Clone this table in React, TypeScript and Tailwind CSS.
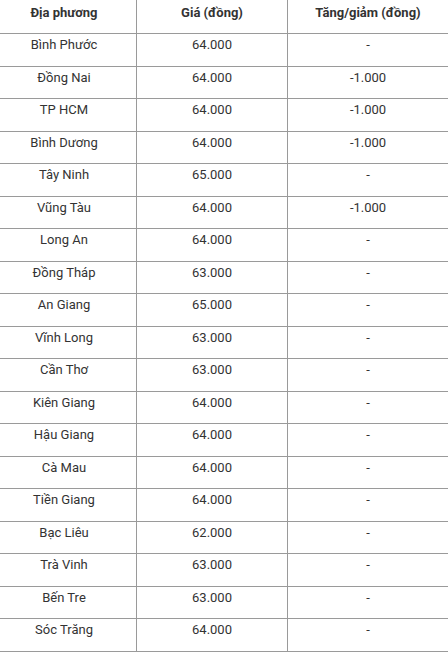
const rows: [string, string, string][] = [
  ["Bình Phước", "64.000", "-"],
  ["Đồng Nai", "64.000", "-1.000"],
  ["TP HCM", "64.000", "-1.000"],
  ["Bình Dương", "64.000", "-1.000"],
  ["Tây Ninh", "65.000", "-"],
  ["Vũng Tàu", "64.000", "-1.000"],
  ["Long An", "64.000", "-"],
  ["Đồng Tháp", "63.000", "-"],
  ["An Giang", "65.000", "-"],
  ["Vĩnh Long", "63.000", "-"],
  ["Cần Thơ", "63.000", "-"],
  ["Kiên Giang", "64.000", "-"],
  ["Hậu Giang", "64.000", "-"],
  ["Cà Mau", "64.000", "-"],
  ["Tiền Giang", "64.000", "-"],
  ["Bạc Liêu", "62.000", "-"],
  ["Trà Vinh", "63.000", "-"],
  ["Bến Tre", "63.000", "-"],
  ["Sóc Trăng", "64.000", "-"],
];

function Row({ cells, head }: { cells: [string, string, string]; head?: boolean }) {
  return (
    <div
      className={`grid grid-cols-[137px_151px_160px] border-b border-[#9a9a9a] ${
        head ? "h-[34px] font-bold" : "h-[32.5px]"
      }`}
    >
      <div className={`border-r border-[#9a9a9a] pr-[8px] text-center ${head ? "pt-[3px]" : "pt-[1px]"}`}>
        {cells[0]}
      </div>
      <div className={`border-r border-[#9a9a9a] text-center ${head ? "pt-[3px]" : "pt-[1px]"}`}>{cells[1]}</div>
      <div className={`text-center ${head ? "pt-[3px]" : "pt-[1px]"}`}>{cells[2]}</div>
    </div>
  );
}

export default function App() {
  return (
    <div className="w-[448px] h-[657px] bg-white text-[13px] leading-5 text-[#333] font-['Roboto',sans-serif]">
      <Row head cells={["Địa phương", "Giá (đồng)", "Tăng/giảm (đồng)"]} />
      {rows.map((r) => (
        <Row key={r[0]} cells={r} />
      ))}
    </div>
  );
}
